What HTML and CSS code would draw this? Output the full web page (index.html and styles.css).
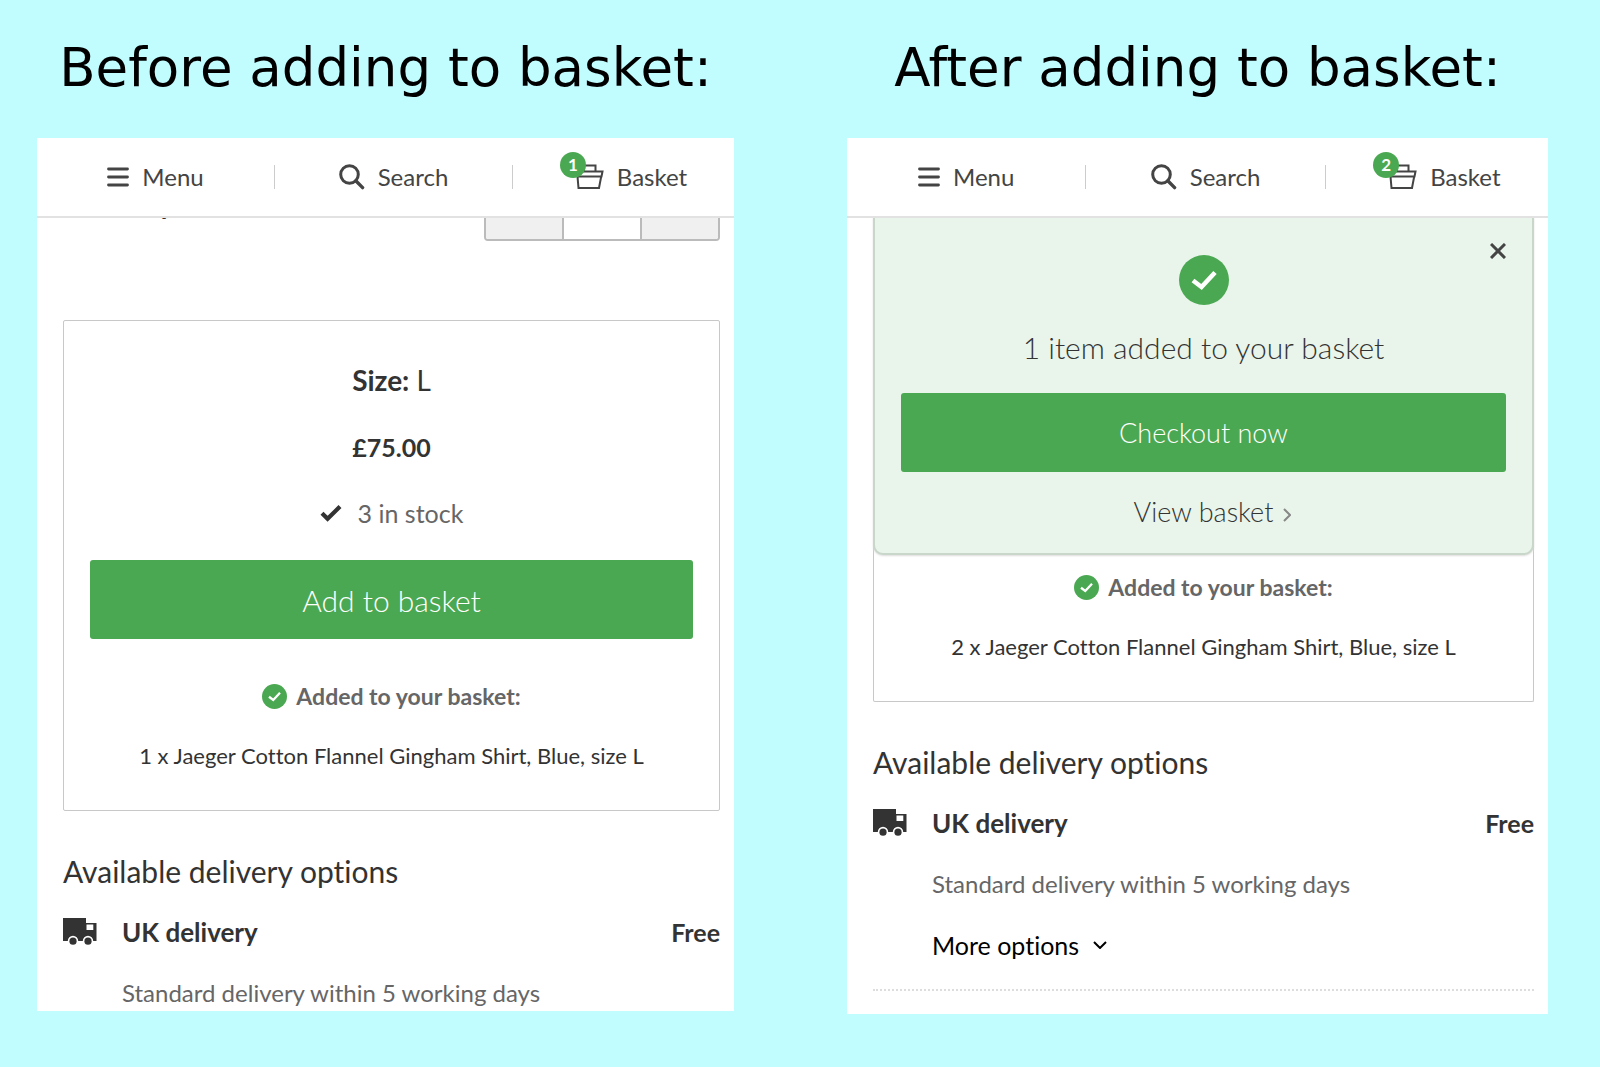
FILE: index.html
```html
<!DOCTYPE html>
<html lang="en">
<head>
    <meta charset="UTF-8">
    <meta name="viewport" content="width=device-width, initial-scale=1.0">
    <title>Adding to basket: before and after</title>
    <link rel="stylesheet" href="styles.css">
</head>
<body>
    <!-- Shared icons -->
    <svg class="sprite" aria-hidden="true">
        <symbol id="icon-menu" viewBox="0 0 22 22">
            <path d="M1.5 3h19M1.5 11h19M1.5 19h19" fill="none" stroke="currentColor" stroke-width="2.8" stroke-linecap="round"/>
        </symbol>
        <symbol id="icon-search" viewBox="0 0 26 26">
            <circle cx="10.5" cy="10.5" r="8.8" fill="none" stroke="currentColor" stroke-width="3"/>
            <path d="M16.8 16.8l6.8 6.8" fill="none" stroke="currentColor" stroke-width="3.4" stroke-linecap="round"/>
        </symbol>
        <symbol id="icon-basket" viewBox="0 0 28 26">
            <path d="M8 7.500V1.500h11.500V7.500M1 7.500h25.500l-1 5H1.500zM1.500 12.500l1 11.500h20.500l2.200-11.500" fill="none" stroke="currentColor" stroke-width="2"/>
        </symbol>
        <symbol id="icon-tick" viewBox="0 0 22 18">
            <path d="M2 9.2l5.6 5.6L20 2.6" fill="none" stroke="currentColor" stroke-width="4.2"/>
        </symbol>
        <symbol id="icon-done" viewBox="0 0 50 50">
            <circle cx="25" cy="25" r="25" fill="#4ba852"/>
            <path d="M14 25.500l8.500 6.500L36 17.500" fill="none" stroke="#fff" stroke-width="4.6"/>
        </symbol>
        <symbol id="icon-van" viewBox="0 0 34 28">
            <path fill="currentColor" fill-rule="evenodd" d="M0 0h23v5h10.500v18h-3.300a5.200 5.200 0 0 0-10.400 0h-4.600a5.200 5.200 0 0 0-10.400 0H0zM23.500 6.500v5.500h6.800V6.500z"/>
            <circle cx="10" cy="23.200" r="3.600" fill="currentColor"/>
            <circle cx="25" cy="23.200" r="3.600" fill="currentColor"/>
        </symbol>
    </svg>

    <main class="comparison">
        <section class="state">
            <h1>Before adding to basket:</h1>
            <div class="screen">
                <nav class="topbar">
                    <a href="#menu"><svg class="menu-icon"><use href="#icon-menu"/></svg>Menu</a>
                    <a href="#search"><svg class="search-icon"><use href="#icon-search"/></svg>Search</a>
                    <a href="#basket"><span class="basket-icon"><svg><use href="#icon-basket"/></svg><span class="badge">1</span></span>Basket</a>
                </nav>
                <div class="content">
                    <div class="quantity">
                        <label for="quantity">Quantity</label>
                        <div class="stepper">
                            <button type="button" aria-label="Decrease quantity"></button>
                            <input id="quantity" type="text">
                            <button type="button" aria-label="Increase quantity"></button>
                        </div>
                    </div>
                    <div class="card">
                        <p class="size"><strong>Size:</strong> L</p>
                        <p class="price">£75.00</p>
                        <p class="stock"><svg><use href="#icon-tick"/></svg>3 in stock</p>
                        <button type="button" class="btn">Add to basket</button>
                        <p class="added"><svg><use href="#icon-done"/></svg>Added to your basket:</p>
                        <p class="item">1 x Jaeger Cotton Flannel Gingham Shirt, Blue, size L</p>
                    </div>
                    <h2>Available delivery options</h2>
                    <div class="delivery">
                        <svg><use href="#icon-van"/></svg>
                        <h3>UK delivery</h3>
                        <strong>Free</strong>
                        <p>Standard delivery within 5 working days</p>
                    </div>
                </div>
            </div>
        </section>

        <section class="state">
            <h1>After adding to basket:</h1>
            <div class="screen">
                <nav class="topbar">
                    <a href="#menu"><svg class="menu-icon"><use href="#icon-menu"/></svg>Menu</a>
                    <a href="#search"><svg class="search-icon"><use href="#icon-search"/></svg>Search</a>
                    <a href="#basket"><span class="basket-icon"><svg><use href="#icon-basket"/></svg><span class="badge">2</span></span>Basket</a>
                </nav>
                <div class="content">
                    <div class="card card-after">
                        <div class="notice">
                            <button type="button" class="close" aria-label="Close">
                                <svg viewBox="0 0 16 16"><path d="M1 1l14 14M15 1L1 15" fill="none" stroke="currentColor" stroke-width="3"/></svg>
                            </button>
                            <svg class="notice-icon"><use href="#icon-done"/></svg>
                            <p class="message">1 item added to your basket</p>
                            <button type="button" class="btn">Checkout now</button>
                            <a class="view" href="#basket">View basket
                                <svg viewBox="0 0 8 14"><path d="M1 1l6 6-6 6" fill="none" stroke="currentColor" stroke-width="2"/></svg>
                            </a>
                        </div>
                        <p class="added"><svg><use href="#icon-done"/></svg>Added to your basket:</p>
                        <p class="item">2 x Jaeger Cotton Flannel Gingham Shirt, Blue, size L</p>
                    </div>
                    <h2>Available delivery options</h2>
                    <div class="delivery">
                        <svg><use href="#icon-van"/></svg>
                        <h3>UK delivery</h3>
                        <strong>Free</strong>
                        <p>Standard delivery within 5 working days</p>
                        <button type="button" class="more">More options
                            <svg viewBox="0 0 14 8"><path d="M1 1l6 6 6-6" fill="none" stroke="currentColor" stroke-width="2"/></svg>
                        </button>
                    </div>
                    <hr>
                </div>
            </div>
        </section>
    </main>
</body>
</html>
```

FILE: styles.css
```css
* {
    box-sizing: border-box;
}
body {
    margin: 0;
    background-color: #c1fcff;
    color: #333;
    font-family: Lato, sans-serif;
    font-size: 25px;
    font-variant-ligatures: none;
    line-height: 36px;
}
h1, h2, h3, p {
    margin: 0;
}
a {
    color: inherit;
    text-decoration: none;
}
button, input {
    font: inherit;
    color: inherit;
}
.sprite {
    display: none;
}
.comparison {
    display: grid;
    grid-template-columns: 697fr 701fr;
    align-items: start;
    gap: 113px;
    padding: 30px 52px 40px 37px;
}
h1 {
    height: 108px;
    color: #000;
    font-family: "DejaVu Sans", sans-serif;
    font-size: 53px;
    font-weight: 400;
    line-height: 76px;
    text-align: center;
    white-space: nowrap;
}
.screen {
    background-color: #fff;
    overflow: hidden;
}

/* Top bar */
.topbar {
    position: relative;
    z-index: 1;
    display: grid;
    grid-template-columns: 237fr 238fr 222fr;
    align-items: center;
    height: 80px;
    background-color: #fff;
    border-bottom: 2px solid #e2e2e2;
    color: #444;
    font-size: 24px;
}
.topbar a {
    display: flex;
    align-items: center;
    justify-content: center;
    gap: 13px;
    height: 24px;
}
.topbar a + a {
    border-left: 1px solid #ccc;
}
.menu-icon {
    width: 22px;
    height: 22px;
}
.search-icon {
    width: 26px;
    height: 26px;
}
.basket-icon {
    position: relative;
    padding-left: 16px;
    height: 26px;
}
.basket-icon svg {
    display: block;
    width: 28px;
    height: 26px;
}
.badge {
    position: absolute;
    top: -12px;
    left: 0;
    width: 26px;
    height: 26px;
    border-radius: 50%;
    background-color: #4ba852;
    color: #fff;
    font-size: 17px;
    font-weight: 700;
    line-height: 26px;
    text-align: center;
}

.content {
    padding: 0 14px 0 26px;
}

/* Quantity row, scrolled under the top bar */
.quantity {
    display: flex;
    align-items: center;
    justify-content: space-between;
    height: 72px;
    margin: -49px 0 79px;
}
.quantity label {
    align-self: flex-start;
    padding-top: 16px;
    font-size: 28px;
    font-weight: 700;
}
.stepper {
    display: flex;
    width: 236px;
    height: 72px;
    border: 2px solid #bbb;
    border-radius: 4px;
    overflow: hidden;
}
.stepper button, .stepper input {
    flex: 1;
    min-width: 0;
    padding: 0;
    border: 0;
    background-color: #f0f0f0;
}
.stepper input {
    border: solid #bbb;
    border-width: 0 2px;
    background-color: #fff;
}

/* Product card */
.card {
    padding: 41px 26px 36px;
    border: 1px solid #c8c8c8;
    border-radius: 2px;
    text-align: center;
}
.size {
    font-size: 28px;
}
.price {
    margin-top: 31px;
    font-weight: 700;
}
.stock {
    display: flex;
    align-items: center;
    justify-content: center;
    gap: 16px;
    margin-top: 30px;
    color: #666;
}
.stock svg {
    width: 22px;
    height: 18px;
    color: #333;
}
.btn {
    display: block;
    width: 100%;
    height: 79px;
    margin-top: 29px;
    border: 0;
    border-radius: 3px;
    background-color: #4ba852;
    color: #fff;
    font-size: 30px;
    font-weight: 300;
}
.added {
    display: flex;
    align-items: center;
    justify-content: center;
    gap: 9px;
    margin-top: 39px;
    color: #666;
    font-size: 23px;
    font-weight: 700;
}
.added svg {
    width: 25px;
    height: 25px;
}
.item {
    margin-top: 24px;
    font-size: 22px;
}

/* Confirmation notice */
.card-after {
    padding-top: 0;
    border-top: 0;
}
.notice {
    position: relative;
    margin: -1px -27px 0;
    padding: 38px 26px 23px;
    border: 2px solid #c9d6ca;
    border-top: 0;
    border-radius: 0 0 10px 10px;
    background-color: #e9f5ea;
    box-shadow: 0 1px 2px #ddd;
}
.notice-icon {
    display: block;
    width: 50px;
    height: 50px;
    margin: 0 auto;
}
.message {
    margin-top: 24px;
    font-size: 30px;
    font-weight: 300;
}
.notice .btn {
    margin-top: 28px;
    font-size: 27px;
}
.view {
    display: flex;
    align-items: center;
    justify-content: center;
    gap: 10px;
    margin-top: 22px;
    padding-left: 18px;
    font-size: 27px;
    font-weight: 300;
}
.view svg {
    width: 8px;
    height: 14px;
    margin-top: 6px;
    color: #888;
}
.close {
    position: absolute;
    top: 26px;
    right: 26px;
    padding: 0;
    border: 0;
    background: none;
    color: #444;
    line-height: 0;
}
.close svg {
    width: 16px;
    height: 16px;
}
.notice + .added {
    margin-top: 14px;
}

/* Delivery */
h2 {
    margin-top: 42px;
    font-size: 30px;
    font-weight: 400;
}
.delivery {
    display: grid;
    grid-template-columns: 59px 1fr auto;
    align-items: center;
    row-gap: 25px;
    margin-top: 25px;
}
.delivery > svg {
    width: 34px;
    height: 28px;
}
.delivery h3 {
    font-size: 26px;
    font-weight: 700;
}
.delivery p {
    grid-column: 2 / -1;
    color: #666;
    font-size: 24px;
}
.more {
    display: flex;
    align-items: center;
    grid-column: 2 / -1;
    gap: 14px;
    padding: 0;
    border: 0;
    background: none;
    color: #000;
}
.more svg {
    width: 14px;
    height: 8px;
}
hr {
    margin: 26px 0 23px;
    border: 0;
    border-top: 2px dotted #ddd;
}
```
